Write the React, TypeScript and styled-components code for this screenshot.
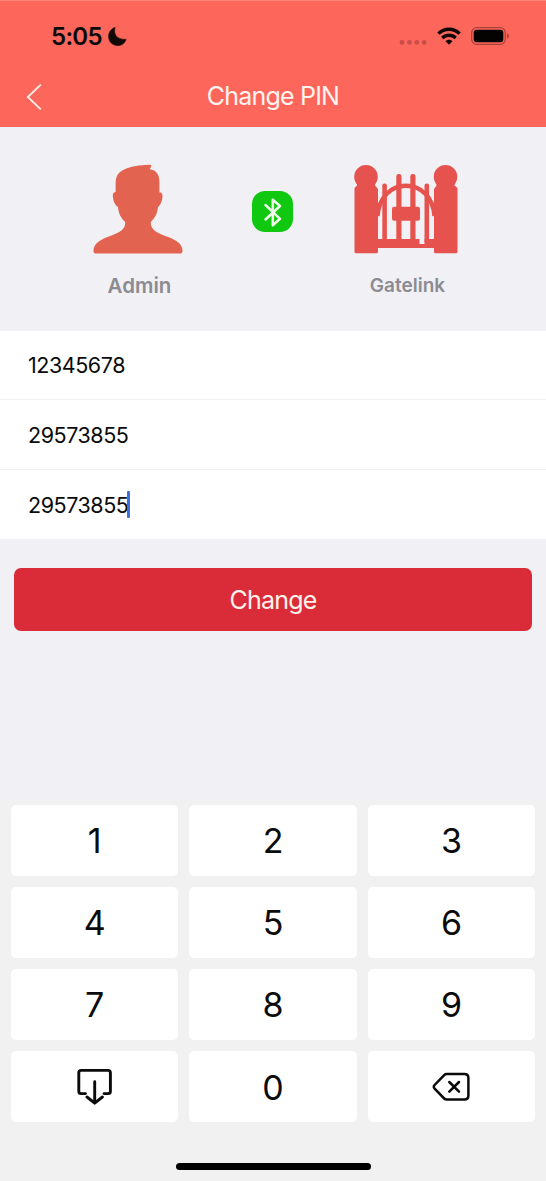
import React from 'react';
import styled, { createGlobalStyle } from 'styled-components';

const GlobalStyle = createGlobalStyle`
  * { box-sizing: border-box; }
  body { margin: 0; background: #f0f0f5; }
  button, input { font: inherit; }
  svg { display: block; flex: none; }
`;

const Screen = styled.div`
  width: 546px;
  height: 1181px;
  display: flex;
  flex-direction: column;
  overflow: hidden;
  background: #f0f0f5;
  color: #0b0b0b;
  font-family: Inter, 'Liberation Sans', sans-serif;
`;

const Header = styled.header`
  height: 127px;
  flex: none;
  background: #fd665b;
  border-top: 1px solid #fd8478;
`;

const StatusBar = styled.div`
  height: 65px;
  padding: 5px 37px 0 51px;
  display: flex;
  align-items: center;
  justify-content: space-between;
`;

const StatusGroup = styled.div<{ $gap: number }>`
  display: flex;
  align-items: center;
  gap: ${(p) => p.$gap}px;
`;

const Clock = styled.span`
  width: 51px;
  padding-top: 2px;
  font-size: 24px;
  font-weight: 600;
  letter-spacing: -0.7px;
  line-height: 30px;
  white-space: nowrap;
`;

const NavBar = styled.div`
  height: 61px;
  display: grid;
  grid-template-columns: 68px 1fr 68px;
  align-items: center;
`;

const BackButton = styled.button`
  border: 0;
  background: none;
  padding: 0 0 0 26px;
`;

const Title = styled.h1`
  margin: 0;
  padding-bottom: 1px;
  color: #fff4ef;
  font-size: 25px;
  font-weight: 400;
  letter-spacing: -0.8px;
  line-height: 30px;
  text-align: center;
`;

const Devices = styled.section`
  height: 204px;
  flex: none;
  padding: 37px 83px 0;
  display: flex;
  justify-content: space-between;
`;

const Device = styled.div<{ $width: number }>`
  width: ${(p) => p.$width}px;
  display: flex;
  flex-direction: column;
  align-items: center;
`;

const DeviceLabel = styled.span<{ $size: number; $spacing: number }>`
  margin-top: 19px;
  padding-left: 3px;
  color: #8c8b91;
  font-size: ${(p) => p.$size}px;
  font-weight: 600;
  letter-spacing: ${(p) => p.$spacing}px;
  line-height: 26px;
`;

const BluetoothBadge = styled.div`
  width: 41px;
  height: 41px;
  margin: 27px -1.5px 0 1.5px;
  border-radius: 13px;
  background: #0fc80f;
  display: flex;
  align-items: center;
  justify-content: center;
`;

const Form = styled.section`
  height: 208px;
  flex: none;
  display: flex;
  flex-direction: column;
  background: #fff;
`;

const Field = styled.div`
  height: 70px;
  flex: none;
  padding-left: 28px;
  display: flex;
  align-items: center;
  border-bottom: 1px solid #efeff0;
  font-size: 21.5px;
  letter-spacing: -0.45px;
  line-height: 28px;
  &:first-child { height: 69px; }
  &:last-child { border: 0; height: 69px; }
`;

const Caret = styled.i`
  width: 3px;
  height: 27px;
  margin-left: -1px;
  border-radius: 1px;
  background: #3f6fd8;
`;

const SubmitButton = styled.button`
  height: 63px;
  flex: none;
  margin: 29px 14px 0;
  padding: 0;
  border: 0;
  border-radius: 7px;
  background: #da2c38;
  color: #fff1ec;
  font-size: 25px;
  letter-spacing: -0.8px;
`;

const Keyboard = styled.section`
  flex: 1;
  margin-top: 169px;
  padding: 4.5px 11px 0;
  background: #f1f1f1;
  display: flex;
  flex-direction: column;
`;

const Keys = styled.div`
  display: grid;
  grid-template-columns: repeat(3, 167.3px);
  grid-auto-rows: 71.2px;
  gap: 11px 11.1px;
`;

const Key = styled.button`
  padding: 0;
  border: 0;
  border-radius: 5px;
  background: #fff;
  color: #0b0b0b;
  display: flex;
  align-items: center;
  justify-content: center;
  font-size: 34px;
  line-height: 40px;
`;

const Digit = styled.span`
  padding-top: 2px;
`;

const HomeIndicator = styled.div`
  width: 195px;
  height: 7px;
  margin: 41px auto 0;
  border-radius: 4px;
  background: #000;
`;

const MoonIcon = () => (
  <svg width="19" height="20" viewBox="0 -0.6 19 20">
    <path d="M7.2 .8C5.2 6.5 7.8 13.2 18.2 12.8C16.5 17 13.3 19 9.8 19C4.6 19 .6 15.2 .6 10C.6 5.5 3.2 2 7.2 .8Z" fill="#120808" stroke="#120808" strokeWidth=".6" strokeLinejoin="round" />
  </svg>
);

const SignalDots = () => (
  <svg width="28" height="20" viewBox="0 0 28 20" fill="#c94e49">
    <circle cx="3" cy="16.4" r="2.4" />
    <circle cx="10.5" cy="16.4" r="2.4" />
    <circle cx="17.8" cy="16.4" r="2.4" />
    <circle cx="25.2" cy="16.4" r="2.4" />
  </svg>
);

const WifiIcon = () => (
  <svg width="24" height="18" viewBox="0 0 24 18" fill="none" stroke="#100606" strokeWidth="3.4">
    <path d="M1.4 6.6C7.3.8 16.7.8 22.6 6.6" />
    <path d="M5.3 10.9C9.1 7.3 14.9 7.3 18.7 10.9" />
    <path d="M12 17.8L8.5 14.3C10.5 12.3 13.5 12.3 15.5 14.3Z" fill="#100606" stroke="none" />
  </svg>
);

const BatteryIcon = () => (
  <svg width="38" height="18" viewBox="0 0 38 18">
    <rect x=".7" y=".7" width="33.6" height="16.6" rx="5" fill="none" stroke="#a8423c" strokeWidth="1.3" />
    <rect x="2.7" y="2.7" width="29.6" height="12.6" rx="3.2" fill="#050202" />
    <path d="M36 6.2Q38 7 38 9T36 11.8Z" fill="#a8423c" />
  </svg>
);

const BackIcon = () => (
  <svg width="17" height="28" viewBox="0 0 17 28" fill="none" stroke="#fff0ea" strokeWidth="1.8">
    <path d="M14.8 1.6L1.8 14L14.8 26.4" />
  </svg>
);

const AdminIcon = () => (
  <svg width="90" height="90" viewBox="0 0 90 90" fill="#e26450">
    <path d="M22.6 28V20C22.6 11 26 7.3 34 4.3C42 1.6 50 .9 57.5 .8Q59 .9 58 2.8L56.8 5.2C63.5 6 66.4 11 66.4 17.5V28.5C69.5 28 69.8 31 69.4 33.5C68.7 39 66.8 41.5 65 43C64.3 50 61.8 54 57.8 58C57.4 65 63 68.5 71 71.5C83 75.5 89.5 79.5 89.5 87Q89.5 89.6 86.5 89.6H3.5Q.5 89.6 .5 87C.5 79.5 7 75.5 18.5 71.5C27 68.5 32.6 65 32.2 58C28 54 25.6 50 25 43C22.8 41.5 20.6 39 20 33.5C19.6 31 19.8 28 22.6 28Z" />
  </svg>
);

const BluetoothIcon = () => (
  <svg width="41" height="41" viewBox="0 0 41 41" fill="none" stroke="#effbe8" strokeWidth="2.5" strokeLinejoin="round" strokeLinecap="round">
    <path d="M13.5 14L28 27.8L20.8 34.3V8.8L28 15L13.5 28.5" />
  </svg>
);

const GateIcon = () => (
  <svg width="104" height="90" viewBox="0 0 104 90" fill="#e6534f">
    <circle cx="12" cy="12.8" r="11.8" />
    <circle cx="91.5" cy="12.8" r="11.8" />
    <path d="M3 19H21V21.5L24 25V75H65.5V80H70.5V75H80V25L82.5 21.5V19H100.5V21.5L103.5 24V87.7Q103.5 89.2 102 89.2H81.5Q80 89.2 80 87.7V84H24V87.7Q24 89.2 22.5 89.2H2Q.5 89.2 .5 87.7V24L3 21.5Z" />
    <path d="M23.5 52C25 33 37 21.7 52 21.7S79 33 80.5 52" fill="none" stroke="#e6534f" strokeWidth="4.4" />
    <rect x="28.3" y="19.4" width="4.6" height="60" rx="2" />
    <rect x="42.3" y="10" width="5.2" height="68" rx="2.4" />
    <rect x="56.3" y="10" width="5.2" height="68" rx="2.4" />
    <rect x="70.5" y="19.4" width="4.6" height="60" rx="2" />
    <rect x="38" y="42.8" width="28" height="14" rx="2" />
  </svg>
);

const HideKeyboardIcon = () => (
  <svg width="36" height="37" viewBox="0 -0.8 36 37" fill="none" stroke="#0b0b0b" strokeWidth="2.9" strokeLinecap="round" strokeLinejoin="round">
    <path d="M8.5 24.8H4.2Q1.8 24.8 1.8 22.4V4Q1.8 1.6 4.2 1.6H31Q33.4 1.6 33.4 4V22.4Q33.4 24.8 31 24.8H27" />
    <path d="M17.7 13V34.2M10 28.2L17.7 34.4L25.4 28.2" />
  </svg>
);

const DeleteIcon = () => (
  <svg width="38" height="30" viewBox="0 -0.4 38 30" fill="none" stroke="#0b0b0b" strokeWidth="2.5" strokeLinecap="round" strokeLinejoin="round">
    <path d="M14.8 1.6H32.4Q36.4 1.6 36.4 5.6V23.2Q36.4 27.2 32.4 27.2H14.8Q13.3 27.2 12.2 26.1L2.6 16.2Q1 14.4 2.6 12.6L12.2 2.7Q13.3 1.6 14.8 1.6Z" />
    <path d="M17.3 9.6L27 19.3M27 9.6L17.3 19.3" />
  </svg>
);

const pins = ['12345678', '29573855', '29573855'];
const digits = ['1', '2', '3', '4', '5', '6', '7', '8', '9'];

export default function App() {
  return (
    <>
      <GlobalStyle />
      <Screen>
        <Header>
          <StatusBar>
            <StatusGroup $gap={6}>
              <Clock>5:05</Clock>
              <MoonIcon />
            </StatusGroup>
            <StatusGroup $gap={10}>
              <SignalDots />
              <WifiIcon />
              <BatteryIcon />
            </StatusGroup>
          </StatusBar>
          <NavBar>
            <BackButton aria-label="Back"><BackIcon /></BackButton>
            <Title>Change PIN</Title>
          </NavBar>
        </Header>
        <Devices>
          <Device $width={110}>
            <AdminIcon />
            <DeviceLabel $size={20.5} $spacing={0}>Admin</DeviceLabel>
          </Device>
          <BluetoothBadge><BluetoothIcon /></BluetoothBadge>
          <Device $width={114}>
            <GateIcon />
            <DeviceLabel $size={19} $spacing={0}>Gatelink</DeviceLabel>
          </Device>
        </Devices>
        <Form>
          {pins.map((pin, i) => (
            <Field key={i}>
              <span>{pin}</span>
              {i === pins.length - 1 && <Caret />}
            </Field>
          ))}
        </Form>
        <SubmitButton>Change</SubmitButton>
        <Keyboard>
          <Keys>
            {digits.map((d) => <Key key={d}><Digit>{d}</Digit></Key>)}
            <Key aria-label="Hide keyboard"><HideKeyboardIcon /></Key>
            <Key><Digit>0</Digit></Key>
            <Key aria-label="Delete"><DeleteIcon /></Key>
          </Keys>
          <HomeIndicator />
        </Keyboard>
      </Screen>
    </>
  );
}
